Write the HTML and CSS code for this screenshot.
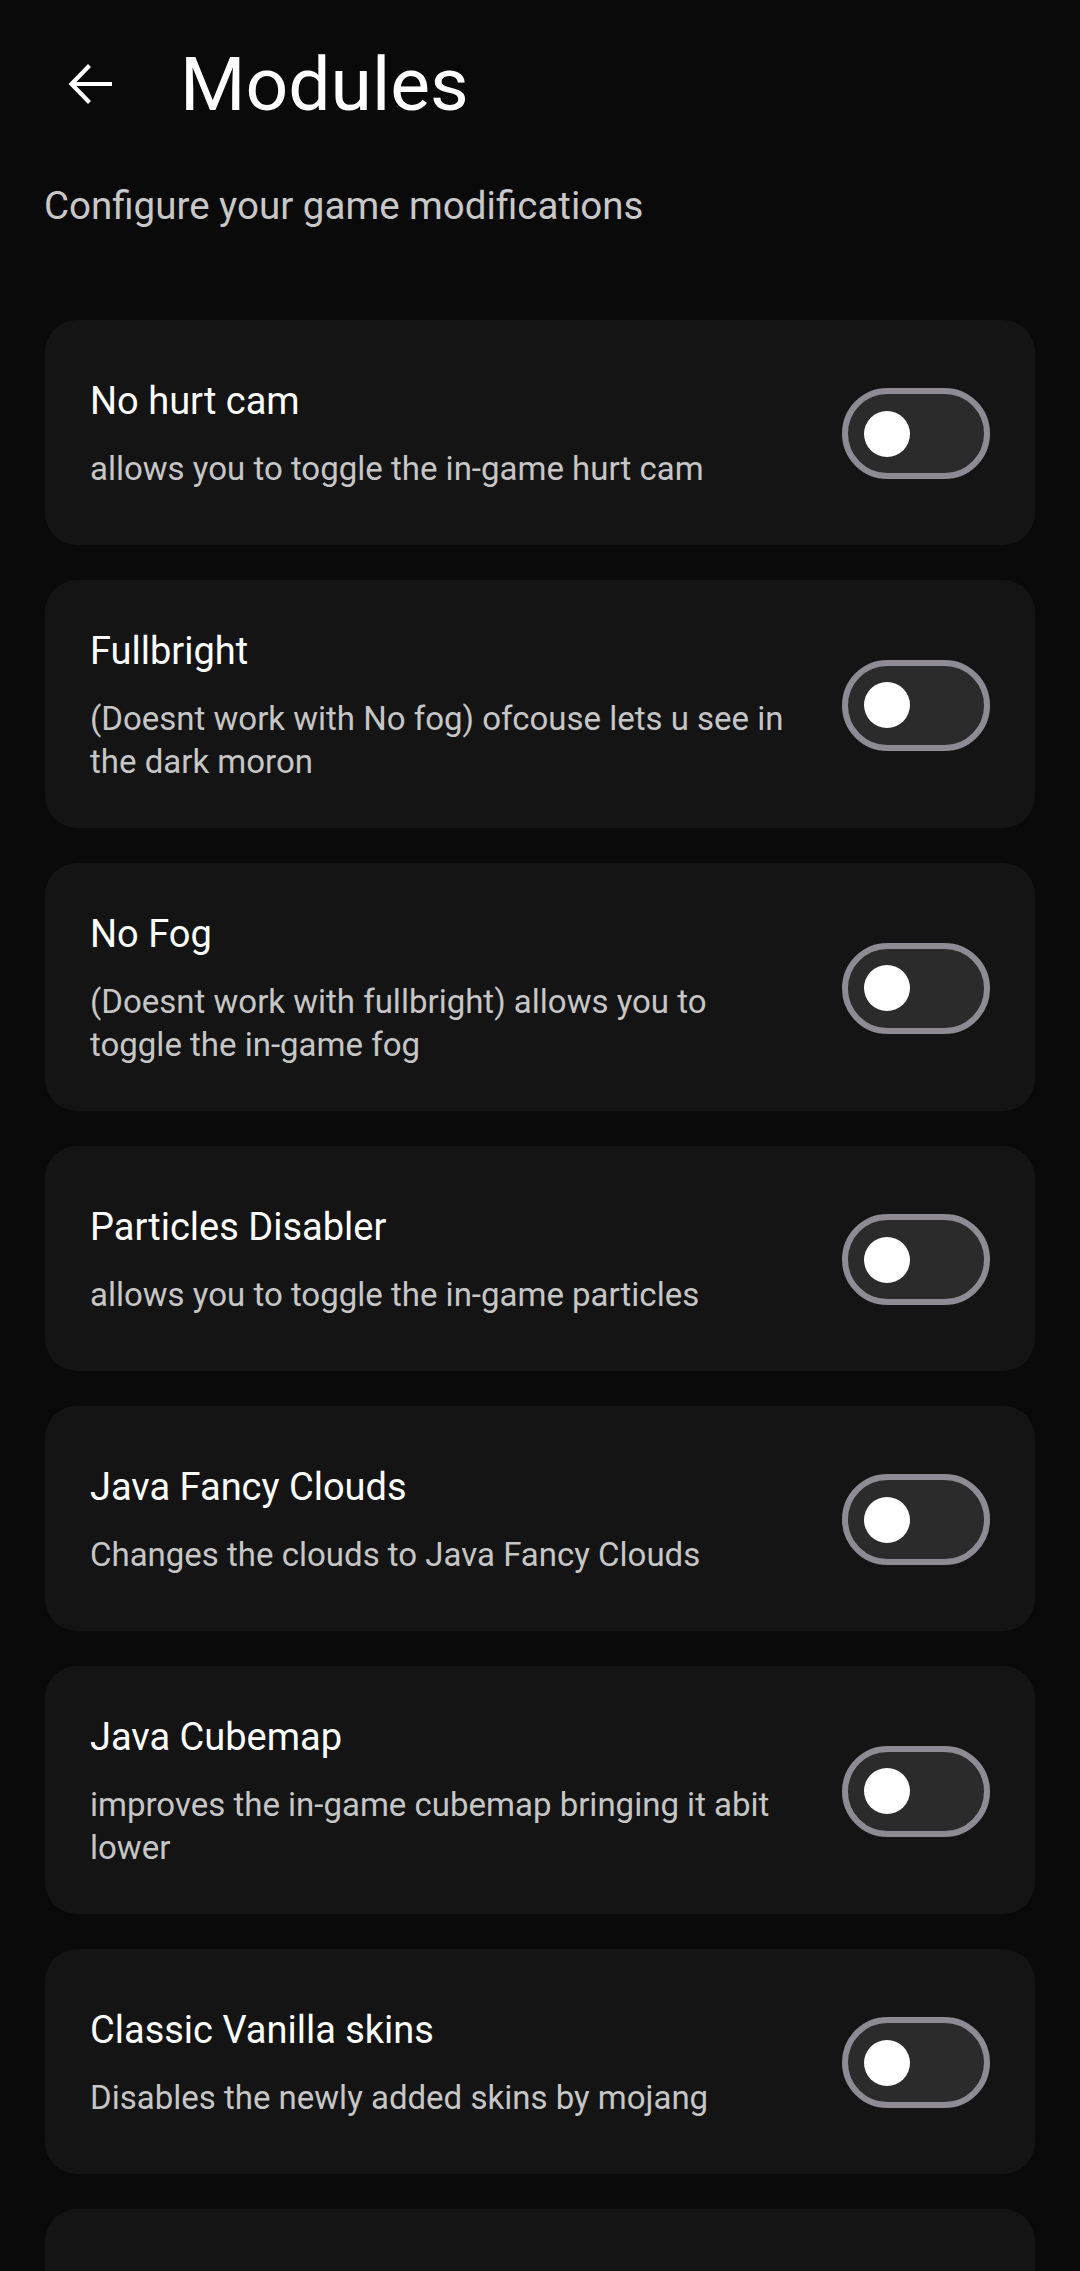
FILE: index.html
```html
<!DOCTYPE html>
<html lang="en">
<head>
<meta charset="utf-8">
<title>Modules</title>
<link rel="stylesheet" href="styles.css">
</head>
<body>
<div class="page">
  <header class="topbar">
    <svg class="back" viewBox="0 0 48 48" width="48" height="48" aria-hidden="true">
      <path d="M45 24 H5 M22.5 5.5 L4.5 24 L22.5 42.5" fill="none" stroke="#ffffff" stroke-width="4.2" stroke-linecap="butt" stroke-linejoin="miter"/>
    </svg>
    <h1 class="title">Modules</h1>
  </header>
  <p class="subtitle">Configure your game modifications</p>

  <main class="list">
    <section class="card">
      <div class="text">
        <h2 class="name">No hurt cam</h2>
        <p class="desc">allows you to toggle the in-game hurt cam</p>
      </div>
      <div class="toggle"><span class="knob"></span></div>
    </section>
    <section class="card">
      <div class="text">
        <h2 class="name">Fullbright</h2>
        <p class="desc">(Doesnt work with No fog) ofcouse lets u see in the dark moron</p>
      </div>
      <div class="toggle"><span class="knob"></span></div>
    </section>
    <section class="card">
      <div class="text">
        <h2 class="name">No Fog</h2>
        <p class="desc">(Doesnt work with fullbright) allows you to toggle the in-game fog</p>
      </div>
      <div class="toggle"><span class="knob"></span></div>
    </section>
    <section class="card">
      <div class="text">
        <h2 class="name">Particles Disabler</h2>
        <p class="desc">allows you to toggle the in-game particles</p>
      </div>
      <div class="toggle"><span class="knob"></span></div>
    </section>
    <section class="card">
      <div class="text">
        <h2 class="name">Java Fancy Clouds</h2>
        <p class="desc">Changes the clouds to Java Fancy Clouds</p>
      </div>
      <div class="toggle"><span class="knob"></span></div>
    </section>
    <section class="card">
      <div class="text">
        <h2 class="name">Java Cubemap</h2>
        <p class="desc">improves the in-game cubemap bringing it abit lower</p>
      </div>
      <div class="toggle"><span class="knob"></span></div>
    </section>
    <section class="card">
      <div class="text">
        <h2 class="name">Classic Vanilla skins</h2>
        <p class="desc">Disables the newly added skins by mojang</p>
      </div>
      <div class="toggle"><span class="knob"></span></div>
    </section>
    <section class="card">
      <div class="text">
        <h2 class="name">&nbsp;</h2>
        <p class="desc">&nbsp;</p>
      </div>
      <div class="toggle"><span class="knob"></span></div>
    </section>
  </main>
</div>
</body>
</html>
```
FILE: styles.css
```css
html, body {
  margin: 0;
  padding: 0;
  background: #0a0a0a;
}
body {
  font-family: Roboto, "Noto Sans", "Liberation Sans", sans-serif;
  color: #ffffff;
  height: 2271px;
  overflow: hidden;
}
.page {
  display: flex;
  flex-direction: column;
}
.topbar {
  display: flex;
  align-items: center;
  gap: 65px;
  padding: 46px 0 0 67px;
  height: 76px;
}
.back {
  flex: none;
  display: block;
}
.title {
  margin: 0;
  font-size: 75px;
  font-weight: 400;
  line-height: 76px;
  letter-spacing: 0;
}
.subtitle {
  margin: 60px 0 0 44px;
  font-size: 38.5px;
  line-height: 48px;
  color: #c8c8c8;
}
.list {
  display: flex;
  flex-direction: column;
  gap: 35px;
  margin: 90px 45px 0 45px;
}
.card {
  box-sizing: border-box;
  min-height: 225px;
  padding: 47px 45px 45px 45px;
  background: #141414;
  border-radius: 32px;
  display: flex;
  align-items: center;
  gap: 41px;
}
.text {
  flex: 1;
  min-width: 0;
}
.name {
  margin: 0;
  font-size: 38px;
  font-weight: 400;
  line-height: 48px;
  color: #ffffff;
}
.desc {
  margin: 22px 0 0 0;
  font-size: 33px;
  line-height: 43px;
  color: #c6c6c6;
}
.toggle {
  flex: none;
  box-sizing: border-box;
  width: 148px;
  height: 91px;
  border: 6px solid #8e8b94;
  border-radius: 46px;
  background: #2b2b2b;
  display: flex;
  align-items: center;
  padding-left: 16px;
}
.knob {
  display: block;
  width: 46px;
  height: 46px;
  border-radius: 50%;
  background: #ffffff;
}
```
